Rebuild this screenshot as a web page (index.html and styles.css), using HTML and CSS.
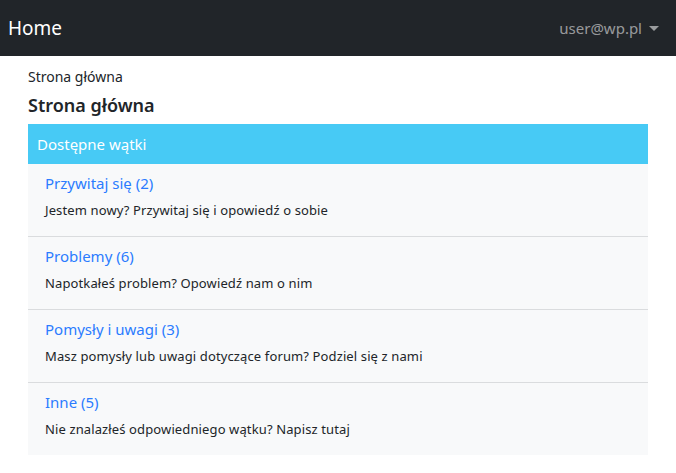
FILE: index.html
```html
<!DOCTYPE html>
<html lang="pl">
<head>
<meta charset="utf-8">
<title>Home</title>
<link rel="stylesheet" href="styles.css">
</head>
<body>
<nav class="navbar">
  <a class="brand" href="#">Home</a>
  <a class="user" href="#">user@wp.pl <span class="caret"></span></a>
</nav>
<main class="container">
  <div class="crumb">Strona główna</div>
  <h1 class="title">Strona główna</h1>
  <section class="card">
    <div class="card-header">Dostępne wątki</div>
    <div class="item">
      <a href="#" class="item-link">Przywitaj się (2)</a>
      <p class="item-desc">Jestem nowy? Przywitaj się i opowiedź o sobie</p>
    </div>
    <div class="item">
      <a href="#" class="item-link">Problemy (6)</a>
      <p class="item-desc">Napotkałeś problem? Opowiedź nam o nim</p>
    </div>
    <div class="item">
      <a href="#" class="item-link">Pomysły i uwagi (3)</a>
      <p class="item-desc">Masz pomysły lub uwagi dotyczące forum? Podziel się z nami</p>
    </div>
    <div class="item">
      <a href="#" class="item-link">Inne (5)</a>
      <p class="item-desc">Nie znalazłeś odpowiedniego wątku? Napisz tutaj</p>
    </div>
  </section>
</main>
</body>
</html>
```
FILE: styles.css
```css
* { box-sizing: border-box; }
body {
  margin: 0;
  font-family: "Noto Sans", "Open Sans", sans-serif;
  color: #212529;
  background: #fff;
}
.navbar {
  height: 56px;
  background: #212529;
  display: flex;
  align-items: center;
  justify-content: space-between;
  padding: 0 16px 0 8px;
}
.brand {
  color: #fff;
  text-decoration: none;
  font-size: 19px;
}
.user {
  color: rgba(255,255,255,0.55);
  text-decoration: none;
  font-size: 15px;
  display: flex;
  align-items: center;
  gap: 7px;
  margin-right: 1px;
}
.caret {
  width: 0; height: 0;
  border-left: 5px solid transparent;
  border-right: 5px solid transparent;
  border-top: 5px solid rgba(255,255,255,0.55);
}
.container {
  width: 620px;
  margin: 0 0 0 28px;
  padding-top: 11px;
}
.crumb {
  font-size: 14px;
  line-height: 20px;
}
.title {
  margin: 7px 0 8px;
  font-size: 18px;
  line-height: 22px;
  font-weight: 600;
}
.card {
  background: #f8f9fa;
}
.card-header {
  background: #47caf5;
  color: #fff;
  font-size: 15px;
  height: 40px;
  display: flex;
  align-items: center;
  padding: 0 9px;
}
.item {
  height: 73px;
  padding: 9px 17px 0;
  border-bottom: 1px solid #dadcde;
}
.item:last-child { border-bottom: 0; height: 72px; }
.item-link {
  display: block;
  color: #2b7cff;
  text-decoration: none;
  font-size: 15px;
  line-height: 20px;
}
.item-desc {
  margin: 7px 0 0;
  font-size: 13px;
  line-height: 20px;
  letter-spacing: 0.12px;
}
```
